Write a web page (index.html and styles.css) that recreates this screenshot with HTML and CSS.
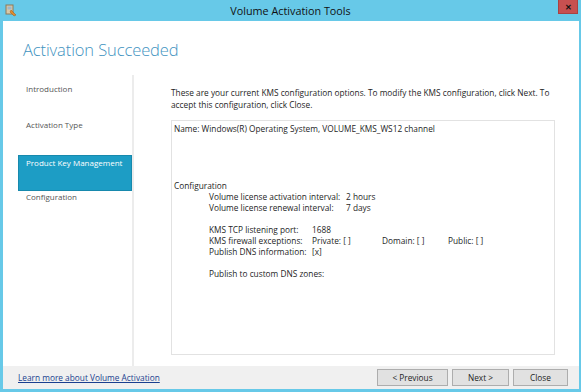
FILE: index.html
```html
<!DOCTYPE html>
<html>
<head>
<meta charset="utf-8">
<link rel="stylesheet" href="styles.css">
</head>
<body>
<div class="window">
  <div class="titlebar">
    <div class="tb-left">
      <svg class="app-icon" width="12" height="13" viewBox="0 0 12 13">
        <rect x="1" y="1" width="7" height="9" fill="#d9c9a8" stroke="#8c7a5a" stroke-width="1"/>
        <rect x="2.5" y="2.5" width="4" height="3" fill="#9fb7c9"/>
        <path d="M6 6 L11 11 L9 12 L5 8 Z" fill="#e08a2c" stroke="#9a5a1a" stroke-width="0.5"/>
      </svg>
    </div>
    <div class="tb-title">Volume Activation Tools</div>
    <div class="tb-right"><div class="close">&#x2715;</div></div>
  </div>
  <div class="client">
    <div class="header"><h1>Activation Succeeded</h1></div>
    <div class="content">
      <ul class="nav">
        <li>Introduction</li>
        <li>Activation Type</li>
        <li class="active">Product Key Management</li>
        <li>Configuration</li>
      </ul>
      <div class="main">
        <p class="intro">These are your current KMS configuration options. To modify the KMS configuration, click Next. To accept this configuration, click Close.</p>
        <div class="box">
          <div class="line">Name: Windows(R) Operating System, VOLUME_KMS_WS12 channel</div>
          <div class="gap4"></div>
          <div class="line">Configuration</div>
          <div class="sub">
            <div class="line row"><span class="c1">Volume license activation interval:</span><span>2 hours</span></div>
            <div class="line row"><span class="c1">Volume license renewal interval:</span><span>7 days</span></div>
            <div class="line"></div>
            <div class="line row"><span class="c2">KMS TCP listening port:</span><span>1688</span></div>
            <div class="line row"><span class="c2">KMS firewall exceptions:</span><span class="c3">Private: [ ]</span><span class="c4">Domain: [ ]</span><span>Public: [ ]</span></div>
            <div class="line row"><span class="c2">Publish DNS information:</span><span>[x]</span></div>
            <div class="line"></div>
            <div class="line">Publish to custom DNS zones:</div>
          </div>
        </div>
      </div>
    </div>
    <div class="footer">
      <a class="learn" href="#">Learn more about Volume Activation</a>
      <div class="buttons">
        <button class="btn b-prev">&lt; Previous</button>
        <button class="btn b-next">Next &gt;</button>
        <button class="btn b-close">Close</button>
      </div>
    </div>
  </div>
</div>
</body>
</html>
```
FILE: styles.css
```css
* { box-sizing: border-box; }
html, body { margin: 0; padding: 0; }
body {
  width: 581px;
  height: 392px;
  overflow: hidden;
  background: #67c9e8;
  font-family: "Open Sans", "Noto Sans", sans-serif;
  color: #1e1e1e;
}
.window {
  width: 581px;
  height: 392px;
  display: flex;
  flex-direction: column;
}
.titlebar {
  height: 21px;
  display: grid;
  grid-template-columns: 1fr auto 1fr;
  align-items: start;
}
.tb-left { padding: 4px 0 0 5px; }
.app-icon { display: block; }
.tb-title {
  font-size: 10.8px;
  line-height: 22px;
  color: #111;
}
.tb-right { display: flex; justify-content: flex-end; padding-right: 3px; }
.close {
  width: 20px;
  height: 14px;
  background: #c75050;
  border: 1px solid #a94242;
  border-top: none;
  color: #111;
  font-size: 8px;
  font-weight: bold;
  line-height: 13px;
  text-align: center;
}
.client {
  flex: 1;
  margin: 0 2px 3px 3px;
  background: #fff;
  display: flex;
  flex-direction: column;
}
.header { height: 54px; padding: 18px 0 0 20px; }
h1 {
  margin: 0;
  font-family: "Open Sans", sans-serif;
  font-weight: 300;
  font-size: 16.5px;
  line-height: 22px;
  color: #3f93bf;
  letter-spacing: -0.1px;
}
.content { flex: 1; display: flex; }
.nav {
  list-style: none;
  margin: 0;
  padding: 8px 0 0 15px;
  width: 131px;
  border-right: 2px solid #ececec;
  font-size: 8px;
  color: #555;
}
.nav li {
  height: 36px;
  line-height: 12px;
  padding-left: 8px;
}
.nav li.active {
  background: #1d9dc5;
  color: #fff;
  border: 1px solid #1789ad;
  padding-left: 7px;
  padding-top: 1px;
}
.main {
  flex: 1;
  padding: 12px 4px 11px 37px;
  display: flex;
  flex-direction: column;
  font-size: 8.3px;
}
.intro {
  margin: 0 0 9px 0;
  line-height: 12px;
  color: #1e1e1e;
}
.box {
  flex: 1;
  border: 1px solid #e2e2e2;
  margin-right: 20px;
  padding: 2px 2px;
  color: #1e1e1e;
}
.line { height: 11px; line-height: 11px; white-space: nowrap; }
.gap4 { height: 46px; }
.sub { padding-left: 35px; }
.row { display: flex; }
.c1 { width: 137px; }
.c2 { width: 103px; }
.c3 { width: 70px; }
.c4 { width: 66px; }
.footer {
  height: 23px;
  background: #f0f0f0;
  display: flex;
  align-items: center;
  justify-content: space-between;
  padding: 0 11px 0 15px;
}
.learn {
  font-size: 8.3px;
  color: #1a3f8f;
  text-decoration: underline;
}
.buttons { display: flex; gap: 4px; }
.btn {
  height: 17px;
  border: 1px solid #adadad;
  background: #e1e1e1;
  font-family: "Open Sans", sans-serif;
  font-size: 8.3px;
  color: #1e1e1e;
  padding: 0;
  line-height: 15px;
}
.b-prev { width: 71px; }
.b-next { width: 57px; }
.b-close { width: 55px; }
```
